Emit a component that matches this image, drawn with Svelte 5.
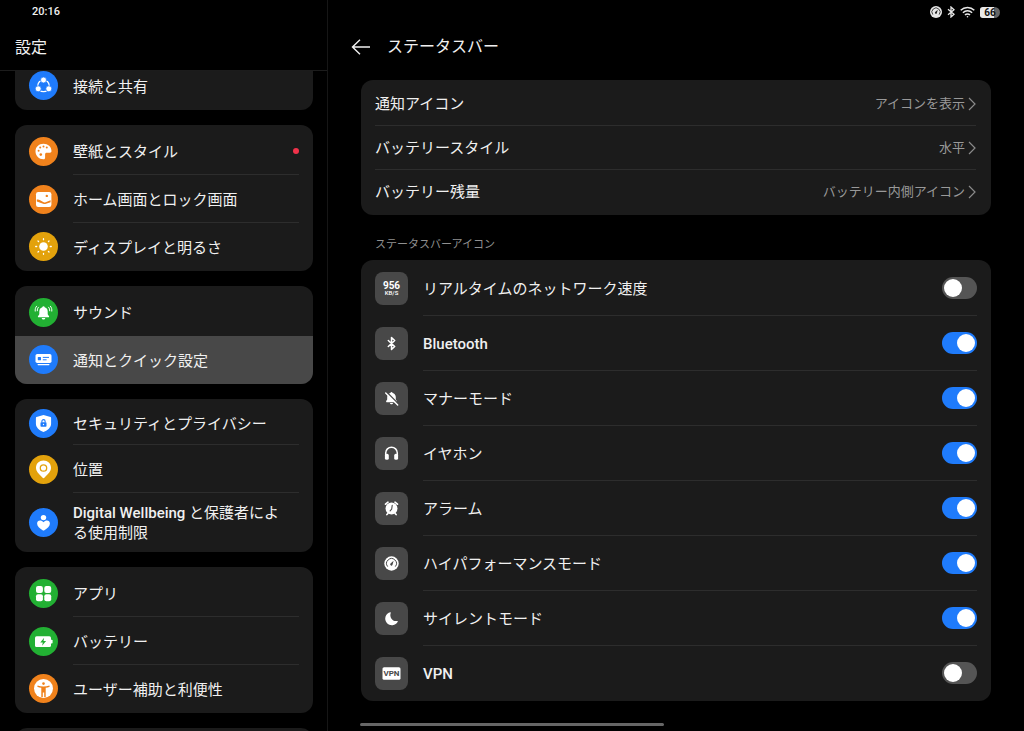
<script>
  // svg bodies: white shapes, holes take currentColor from the badge
  const menuIcons = {
    share: `<circle cx="14.5" cy="14.9" r="5.8" fill="none" stroke="#fff" stroke-width="1.3"/><g stroke="currentColor" stroke-width=".8"><circle cx="14.5" cy="9" r="3"/><circle cx="9.2" cy="17.8" r="3"/><circle cx="19.8" cy="17.8" r="3"/></g>`,
    palette: `<path d="M14.5 6.7c-4.6 0-8 3.3-8 7.6 0 4.5 3.5 8 8 8 1.2 0 1.600-.8 1.600-1.800v-3.300c0-.9.6-1.500 1.500-1.500h3.300c1 0 1.600-.5 1.600-1.700 0-4.300-3.600-7.300-8-7.300z"/><g fill="currentColor"><circle cx="9.600" cy="13.800" r="1"/><circle cx="11.200" cy="10.600" r="1"/><circle cx="14.500" cy="9.400" r="1"/><circle cx="17.800" cy="10.600" r="1"/><circle cx="11.800" cy="17.600" r="1.300"/></g>`,
    image: `<rect x="7" y="7" width="15.4" height="15" rx="2.2"/><circle cx="17.8" cy="10.900" r="1.200" fill="currentColor"/><path d="M7.800 14.600c1.200-.4 2.300-.1 3.400.6l3 1.900c.8.500 1.500.5 2.400.1l5-1.900v2l-4.600 1.500c-1 .3-1.900.3-2.900-.1l-6.300-2.300z" fill="currentColor"/>`,
    sun: `<circle cx="14.5" cy="14.5" r="4.300"/><g stroke="#fff" stroke-width="1.300" stroke-linecap="round"><path d="M14.5 6.700v1M14.5 21.300v1M6.700 14.500h1M21.300 14.500h1M9 9l.6.6M19.400 19.400l.6.6M9 20l.6-.6M19.400 9.600l.6-.6"/></g>`,
    bell: `<path d="M14.500 8.200c.7 0 1.100.4 1.200 1 2 .6 3 2.200 3 4.300v2.700l1.300 2c.3.600 0 1-.6 1H9.600c-.6 0-.9-.4-.6-1l1.300-2v-2.700c0-2.100 1-3.700 3-4.300.1-.6.5-1 1.200-1zM12.700 20h3.600c-.2 1-.9 1.500-1.800 1.500s-1.600-.5-1.800-1.500z"/><path d="M9.500 9.200c-.9 1-1.300 2.200-1.200 3.600M7.600 8.200c-1.200 1.300-1.600 3-1.400 4.900M19.500 9.200c.9 1 1.300 2.200 1.200 3.600M21.400 8.200c1.200 1.300 1.600 3 1.400 4.900" fill="none" stroke="#fff" stroke-width="1" stroke-linecap="round"/>`,
    panel: `<rect x="6.500" y="9" width="16" height="9" rx="1.800"/><rect x="8.500" y="19" width="12" height="1.200" rx=".6"/><rect x="8.800" y="12" width="3.200" height="3.200" rx=".5" fill="currentColor"/><path d="M13.800 12.400h6.200M13.800 14.800h3.800" stroke="currentColor" stroke-width="1"/>`,
    shield: `<path d="M14.500 6l7 2.100c.4.100.6.400.6.800v5.600c0 3.800-2.800 6.600-7.600 8.600-4.800-2-7.600-4.800-7.600-8.600V8.900c0-.4.200-.7.600-.8z"/><rect x="11.500" y="13.200" width="6" height="4.600" rx=".8" fill="currentColor"/><path d="M12.900 13.500v-1.300a1.600 1.600 0 0 1 3.200 0v1.300" fill="none" stroke="currentColor" stroke-width="1.100"/><circle cx="14.500" cy="15.500" r=".7"/>`,
    pin: `<path d="M14.500 5.600c4.200 0 7.500 3.100 7.500 7.200 0 3.400-2.400 5.800-6.400 9.800-.7.700-1.500.7-2.200 0C9.400 18.600 7 16.200 7 12.800c0-4.100 3.300-7.200 7.500-7.200z"/><circle cx="14.500" cy="13" r="3.200" fill="none" stroke="currentColor" stroke-width="1.300"/>`,
    heart: `<circle cx="14.500" cy="9.600" r="2.700"/><path d="M14.500 14.300c1-1.400 2.200-1.900 3.400-1.900 1.800 0 3 1.200 3 3 0 2.600-2.600 4.900-5.500 6.900-.6.400-1.200.4-1.800 0-2.900-2-5.500-4.300-5.500-6.900 0-1.800 1.200-3 3-3 1.200 0 2.400.5 3.400 1.900z"/>`,
    apps: `<rect x="7" y="7" width="6.900" height="6.900" rx="2"/><rect x="15.300" y="7" width="6.900" height="6.900" rx="2"/><rect x="7" y="15.300" width="6.900" height="6.900" rx="2"/><rect x="15.300" y="15.300" width="6.900" height="6.900" rx="2"/>`,
    battery: `<rect x="6" y="9.300" width="16" height="10.800" rx="1.600"/><path d="M22 12.800h.8c.5 0 .8.300.8.800v2.200c0 .5-.3.800-.8.800H22z"/><path d="M15.200 10.800l-4 4.600h2.600l-.7 3.300 4-4.700h-2.600z" fill="currentColor"/>`,
    person: `<circle cx="14.500" cy="14.500" r="9.500"/><g fill="currentColor"><circle cx="14.500" cy="9.600" r="1.300"/><path d="M8.600 11.500c3.600 1.300 8.200 1.300 11.800 0l.3 1.200c-1.300.6-2.700.9-4 1.100V23h-1.500v-4.500h-1.400V23h-1.500v-9.200c-1.300-.2-2.700-.5-4-1.100z"/></g>`
  };

  const tileIcons = {
    speed: `<text x="16.500" y="17" text-anchor="middle" font-size="10" font-weight="700">956</text><text x="16.500" y="23" text-anchor="middle" font-size="6" font-weight="500">KB/S</text>`,
    bluetooth: `<path d="M13.300 13.500l6.400 6-3.200 2.900V10.600l3.200 2.900-6.400 6" fill="none" stroke="#fff" stroke-width="1.500" stroke-linejoin="round" stroke-linecap="round"/>`,
    mute: `<path d="M16.500 10c.6 0 1 .4 1.100.9 2 .5 3.200 2 3.200 4.100v2.400l1.200 1.900c.2.500 0 .9-.6.900h-9.800c-.6 0-.8-.4-.6-.9l1.200-1.900V15c0-2.100 1.200-3.600 3.200-4.100.1-.5.500-.9 1.100-.9zM14.900 20.900h3.200c-.2.900-.8 1.400-1.600 1.400s-1.400-.5-1.600-1.400z"/><path d="M11.800 10.200l12 12" stroke="currentColor" stroke-width="1.400"/><path d="M10.700 11l12 12" stroke="#fff" stroke-width="1.400" stroke-linecap="round"/>`,
    headset: `<path d="M10.700 19v-3a5.800 5.800 0 0 1 11.600 0v3" fill="none" stroke="#fff" stroke-width="1.500"/><rect x="9.900" y="16.800" width="3.900" height="6" rx="1.600"/><rect x="19.200" y="16.800" width="3.900" height="6" rx="1.600"/>`,
    alarm: `<circle cx="16.500" cy="16.600" r="6"/><path d="M10.500 12.200l2.500-2M22.500 12.200l-2.500-2M12.900 21.400l-1 1.200M20.100 21.400l1 1.200" stroke="#fff" stroke-width="1.600" stroke-linecap="round"/><path d="M17.200 13.400l-.5 3.600-1.600 1.900" fill="none" stroke="currentColor" stroke-width="1.100" stroke-linecap="round"/>`,
    gauge: `<circle cx="16.500" cy="16.500" r="7.200"/><path d="M12.700 19.600a4.900 4.900 0 1 1 7.600 0" fill="none" stroke="currentColor" stroke-width="1"/><path d="M18.600 13.800l-1 3.800a1.200 1.200 0 1 1-2.100-1z" fill="currentColor"/>`,
    moon: `<path d="M15.300 10.200a6.600 6.600 0 1 0 7.500 9.200.4.400 0 0 0-.5-.5c-4.500 1.200-8.300-3.500-6.500-8.200.1-.3-.1-.6-.5-.5z"/>`,
    vpn: `<rect x="7.500" y="10.200" width="18" height="12.600" rx="1.600"/><text x="16.500" y="19.300" text-anchor="middle" font-size="8" font-weight="700" fill="currentColor">VPN</text>`
  };

  const groups = [
    [{ icon: "share", color: "blue", text: "接続と共有" }],
    [
      { icon: "palette", color: "orange", text: "壁紙とスタイル", dot: true },
      { icon: "image", color: "orange", text: "ホーム画面とロック画面" },
      { icon: "sun", color: "yellow", text: "ディスプレイと明るさ" }
    ],
    [
      { icon: "bell", color: "green", text: "サウンド", plain: true },
      { icon: "panel", color: "blue", text: "通知とクイック設定", selected: true }
    ],
    [
      { icon: "shield", color: "blue", text: "セキュリティとプライバシー", compact: true },
      { icon: "pin", color: "yellow", text: "位置" },
      { icon: "heart", color: "blue", latin: "Digital Wellbeing", text: " と保護者による使用制限" }
    ],
    [
      { icon: "apps", color: "green", text: "アプリ" },
      { icon: "battery", color: "green", text: "バッテリー" },
      { icon: "person", color: "orange", text: "ユーザー補助と利便性" }
    ],
    []
  ];

  const options = [
    { text: "通知アイコン", value: "アイコンを表示" },
    { text: "バッテリースタイル", value: "水平" },
    { text: "バッテリー残量", value: "バッテリー内側アイコン" }
  ];

  let switches = [
    { id: "speed", text: "リアルタイムのネットワーク速度", on: false },
    { id: "bluetooth", text: "Bluetooth", latin: true, on: true },
    { id: "mute", text: "マナーモード", on: true },
    { id: "headset", text: "イヤホン", on: true },
    { id: "alarm", text: "アラーム", on: true },
    { id: "gauge", text: "ハイパフォーマンスモード", on: true },
    { id: "moon", text: "サイレントモード", on: true },
    { id: "vpn", text: "VPN", latin: true, on: false }
  ];
</script>

<div class="screen" lang="ja">
  <aside class="sidebar">
    <div class="status"><time>20:16</time></div>
    <h1 class="title">設定</h1>
    <nav class="menu">
      {#each groups as group, i}
        <div class="card" class:cut={i == 0}>
          {#each group as item}
            <a
              href="#{item.icon}"
              class="row"
              class:selected={item.selected}
              class:plain={item.plain}
              class:compact={item.compact}
            >
              <span class="badge {item.color}">
                <svg viewBox="0 0 29 29" fill="#fff" aria-hidden="true">{@html menuIcons[item.icon]}</svg>
              </span>
              <span class="row-body">
                <span class="label">{#if item.latin}<span class="latin">{item.latin}</span>{/if}{item.text}</span>
                {#if item.dot}<span class="dot"></span>{/if}
              </span>
            </a>
          {/each}
        </div>
      {/each}
    </nav>
  </aside>

  <main class="detail">
    <div class="status right">
      <svg width="12" height="12" viewBox="9.300 9.300 14.400 14.400" fill="#e8e8e8" aria-hidden="true">{@html tileIcons.gauge}</svg>
      <svg width="8" height="12" viewBox="0 0 8 12" fill="none" stroke="#e8e8e8" stroke-width="1.300" aria-hidden="true">
        <path d="M1 3.300l6 5-3 2.700V1l3 2.700-6 5" />
      </svg>
      <svg width="15" height="12" viewBox="0 0 15 12" fill="none" stroke="#e8e8e8" stroke-width="1.500" aria-hidden="true">
        <path d="M.7 4.300a9.800 9.800 0 0 1 13.600 0M2.900 6.700a6.600 6.600 0 0 1 9.200 0M5 9a3.500 3.500 0 0 1 5 0" />
        <circle cx="7.500" cy="10.700" r=".8" fill="#e8e8e8" stroke="none" />
      </svg>
      <span class="charge">66</span>
    </div>
    <header class="bar">
      <button class="back" aria-label="戻る">
        <svg width="20" height="16" viewBox="0 0 20 16" fill="none" stroke="#f0f0f0" stroke-width="1.400" aria-hidden="true">
          <path d="M19 8H1.500M9 .8L1.500 8 9 15.200" />
        </svg>
      </button>
      <h2>ステータスバー</h2>
    </header>

    <div class="content">
      <section class="card options">
        {#each options as option}
          <button class="option">
            <span>{option.text}</span>
            <span class="value">
              {option.value}
              <svg width="8" height="14" viewBox="0 0 8 14" fill="none" stroke="#8a8a8a" stroke-width="1.200" aria-hidden="true">
                <path d="M1 1l6 6-6 6" />
              </svg>
            </span>
          </button>
        {/each}
      </section>

      <h3>ステータスバーアイコン</h3>

      <section class="card switches">
        {#each switches as item}
          <div class="switch-row">
            <svg class="tile" viewBox="0 0 33 33" fill="#fff" aria-hidden="true">{@html tileIcons[item.id]}</svg>
            <div class="switch-body">
              <label for={item.id} class:latin={item.latin}>{item.text}</label>
              <input type="checkbox" id={item.id} bind:checked={item.on} />
            </div>
          </div>
        {/each}
      </section>
    </div>
  </main>

  <div class="handle"></div>
</div>

<style>
:global(body) {
  background: #000;
}

.screen {
  display: grid;
  grid-template-columns: 328px 1fr;
  height: 100vh;
  overflow: hidden;
  background: #000;
  color: #f0f0f0;
  font-family: Roboto, "Noto Sans CJK JP", sans-serif;
  font-size: 15px;
  font-weight: 400;
  line-height: 20px;
}

h1, h2, h3 {
  margin: 0;
  font-size: 16px;
  font-weight: 400;
}

button {
  padding: 0;
  border: 0;
  background: none;
  color: inherit;
  font: inherit;
  cursor: pointer;
}

svg {
  display: block;
}

.latin {
  font-weight: 500;
}

/* left pane */
.sidebar {
  display: flex;
  flex-direction: column;
  min-height: 0;
  box-sizing: border-box;
  border-right: 1px solid #161616;
}

.status {
  display: flex;
  align-items: center;
  height: 24px;
  padding: 0 32px;
  font-size: 11px;
  font-weight: 500;
}

.title {
  padding: 14px 15px 12px;
  border-bottom: 1px solid #1c1c1c;
}

.menu {
  display: flex;
  flex-direction: column;
  flex: 1;
  gap: 15px;
  min-height: 0;
  padding: 0 14px 0 15px;
  overflow: hidden auto;
  scrollbar-width: none;
}

.card {
  flex: none;
  padding: 2px 0 1px;
  border-radius: 12px;
  background: #1b1b1b;
  overflow: hidden;
}

.card:empty {
  height: 40px;
}

.row {
  display: flex;
  align-items: center;
  gap: 15px;
  padding: 0 14px;
  color: inherit;
  text-decoration: none;
}

.row-body {
  display: flex;
  align-items: center;
  justify-content: space-between;
  flex: 1;
  min-height: 47px;
  border-bottom: 1px solid #2d2d2d;
}

.plain .row-body {
  border-color: transparent;
}

.row:last-child .row-body {
  border-bottom: 0;
}

.compact .row-body {
  min-height: 43px;
}

.card.cut {
  padding: 0 0 10px;
  border-radius: 0 0 12px 12px;
}

.cut .row-body {
  min-height: 29px;
}

.card:has(.selected) {
  padding-bottom: 0;
}

.selected {
  padding-bottom: 1px;
  background: #484848;
}

.label {
  max-width: 212px;
  padding: 10px 0 8px;
}

.cut .label,
.compact .label {
  padding: 2px 0 0;
}

.badge {
  width: 29px;
  height: 29px;
  border-radius: 50%;
  background: currentColor;
}

.blue { color: #1f7bfb; }
.orange { color: #f0821c; }
.yellow { color: #e3a20c; }
.green { color: #22b033; }

.dot {
  width: 6px;
  height: 6px;
  border-radius: 50%;
  background: #f0324a;
}

/* right pane */
.detail {
  min-width: 0;
}

.right {
  justify-content: flex-end;
  gap: 5px;
  padding: 0 24px;
  color: #222;
}

.charge {
  width: 20px;
  border-radius: 3px 6px 6px 3px;
  background: linear-gradient(90deg, #e8e8e8 70%, #666 70%);
  color: #111;
  font-size: 10px;
  font-weight: 700;
  line-height: 11px;
  text-align: center;
}

.bar {
  display: flex;
  align-items: center;
  gap: 16px;
  height: 46px;
  padding: 0 23px;
}

.content {
  padding: 10px 33px;
}

.option {
  display: flex;
  align-items: center;
  justify-content: space-between;
  width: calc(100% - 29px);
  height: 44px;
  margin: 0 14px;
  border-bottom: 1px solid #2d2d2d;
}

.option:last-child {
  height: 43px;
  border-bottom: 0;
}

.value {
  display: flex;
  align-items: center;
  gap: 3px;
  color: #999;
  font-size: 13px;
}

h3 {
  padding: 20px 14px 5px;
  color: #909090;
  font-size: 11px;
}

.options {
  padding: 2px 0;
}

.switches {
  padding: 1px 0;
}

.switch-row {
  display: flex;
  align-items: center;
  gap: 15px;
  padding: 0 14px;
}

.tile {
  flex: none;
  width: 33px;
  height: 33px;
  border-radius: 8px;
  background: #484848;
  color: #484848;
}

.switch-body {
  display: flex;
  align-items: center;
  flex: 1;
  height: 54px;
  border-bottom: 1px solid #2d2d2d;
}

.switch-row:last-child .switch-body {
  border-bottom: 0;
}

.switch-body label {
  flex: 1;
  padding-top: 2px;
}

input {
  appearance: none;
  display: flex;
  box-sizing: border-box;
  width: 35px;
  height: 22px;
  margin: 0;
  padding: 2px;
  border-radius: 11px;
  background: #555;
  cursor: pointer;
}

input::before {
  content: "";
  width: 18px;
  height: 18px;
  border-radius: 50%;
  background: #fff;
}

input:checked {
  justify-content: flex-end;
  background: #1f7bfb;
}

/* gesture handle over both panes */
.handle {
  position: fixed;
  bottom: 5px;
  left: 50%;
  width: 304px;
  height: 3px;
  margin-left: -152px;
  border-radius: 2px;
  background: #666;
}
</style>
